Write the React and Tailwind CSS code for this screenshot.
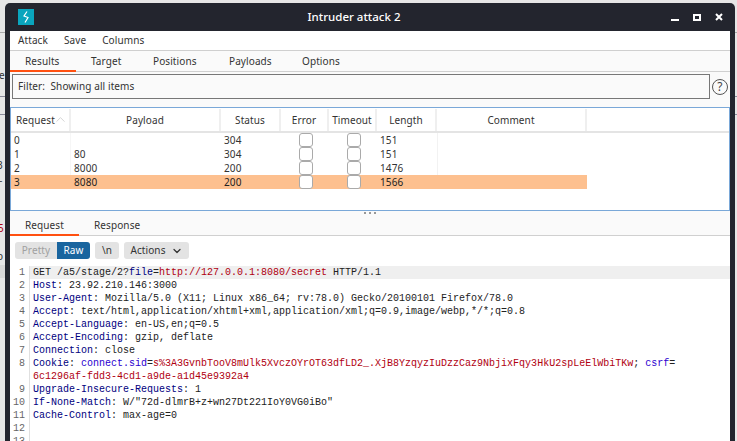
import { ChevronDown, ChevronUp } from 'lucide-react';

const UI = "font-['Noto_Sans',sans-serif]";

const COLUMNS = [
  { label: 'Request', width: 'w-[60px]' },
  { label: 'Payload', width: 'w-[150px]' },
  { label: 'Status', width: 'w-[60px]' },
  { label: 'Error', width: 'w-[48px]' },
  { label: 'Timeout', width: 'w-[48px]' },
  { label: 'Length', width: 'w-[60px]' },
  { label: 'Comment', width: 'w-[150px]' },
];

const ROWS = [
  { id: '0', payload: '', status: '304', length: '151' },
  { id: '1', payload: '80', status: '304', length: '151' },
  { id: '2', payload: '8000', status: '200', length: '1476' },
  { id: '3', payload: '8080', status: '200', length: '1566', selected: true },
];

const N = ({ children }) => <span className="text-[#000080]">{children}</span>;
const R = ({ children }) => <span className="text-[#b00010]">{children}</span>;
const B = ({ children }) => <span className="text-[#2a00d0]">{children}</span>;

const LINES = [
  { n: 1, active: true, text: <>GET /a5/stage/2?<N>file</N>=<R>http://127.0.0.1:8080/secret</R> HTTP/1.1</> },
  { n: 2, text: <><N>Host</N>: 23.92.210.146:3000</> },
  { n: 3, text: <><N>User-Agent</N>: Mozilla/5.0 (X11; Linux x86_64; rv:78.0) Gecko/20100101 Firefox/78.0</> },
  { n: 4, text: <><N>Accept</N>: text/html,application/xhtml+xml,application/xml;q=0.9,image/webp,*/*;q=0.8</> },
  { n: 5, text: <><N>Accept-Language</N>: en-US,en;q=0.5</> },
  { n: 6, text: <><N>Accept-Encoding</N>: gzip, deflate</> },
  { n: 7, text: <><N>Connection</N>: close</> },
  { n: 8, text: <><N>Cookie</N>: <B>connect.sid</B>=<R>s%3A3GvnbTooV8mUlk5XvczOYrOT63dfLD2_.XjB8YzqyzIuDzzCaz9NbjixFqy3HkU2spLeElWbiTKw</R>; <B>csrf</B>=</> },
  { n: '', text: <R>6c1296af-fdd3-4cd1-a9de-a1d45e9392a4</R> },
  { n: 9, text: <><N>Upgrade-Insecure-Requests</N>: 1</> },
  { n: 10, text: <><N>If-None-Match</N>: W/"72d-dlmrB+z+wn27Dt221IoY0VG0iBo"</> },
  { n: 11, text: <><N>Cache-Control</N>: max-age=0</> },
  { n: 12, text: '' },
  { n: 13, text: '' },
];

export default function App() {
  return (
    <div className={`relative w-[737px] h-[441px] overflow-hidden bg-[#e6e6e6] pt-[3px] pl-[5px] pr-[2px] ${UI}`}>
      {/* Whatever is behind the window, left edge */}
      <div className="absolute left-0 top-0 w-[5px] h-[441px] overflow-hidden text-[10px] text-[#333]">
        <div className="absolute left-0 top-[32px] w-full h-px bg-[#aaa]" />
        <div className="absolute left-0 top-[96px] w-full h-px bg-[#8a8a9a]" />
        <div className="absolute left-0 top-[114px] w-full h-px bg-[#8a8a9a]" />
        <span className="absolute -left-[1px] top-[68px]">e</span>
        <span className="absolute -left-[3px] top-[158px]">3</span>
        <span className="absolute -left-[3px] top-[171px]">L</span>
        <span className="absolute -left-[2px] top-[221px] text-[#b00010]">5</span>
        <span className="absolute -left-[3px] top-[249px]">o</span>
        <div className="absolute left-0 top-[265px] w-full h-[13px] bg-[#d8d8d8]" />
      </div>
      {/* Right edge */}
      <div className="absolute right-0 top-0 w-[2px] h-[441px]">
        <div className="absolute left-0 top-[32px] w-full h-px bg-[#aaa]" />
        <div className="absolute left-0 top-[96px] w-full h-px bg-[#8a8a9a]" />
        <div className="absolute left-0 top-[114px] w-full h-px bg-[#8a8a9a]" />
      </div>

      {/* Window */}
      <div className="relative h-[438px] flex flex-col rounded-t-[5px] bg-[#23252e] px-[5px] overflow-hidden">
        {/* Title bar */}
        <div className="relative h-[28px] shrink-0 flex items-center justify-center pr-[32px] text-[11.5px] font-medium text-white">
          <div className="absolute left-[8px] top-[6px] w-4 h-4 bg-[#0aa5bd] flex items-center justify-center">
            <svg width="8" height="12" viewBox="0 0 8 12" fill="none" stroke="#fff" strokeWidth="1.2">
              <path d="M5 0.5 L2 5 L6 6.5 L3 11.5" />
            </svg>
          </div>
          Intruder attack 2
          <div className="absolute right-[3px] top-[7px] flex items-center">
            <svg width="68" height="14" viewBox="0 0 68 14" fill="none" stroke="#fff" strokeWidth="2">
              <path d="M12 10 H20" />
              <rect x="35" y="5" width="6" height="5" />
              <path d="M57 4 L63 10 M63 4 L57 10" />
            </svg>
          </div>
        </div>

        {/* Content */}
        <div className="flex-1 flex flex-col bg-white text-[10px] tracking-[0.1px] text-[#333]">
          {/* Menu */}
          <div className="h-[20px] shrink-0 flex items-center gap-[16px] pl-2 bg-white border-b border-[#cfcfcf]">
            <span>Attack</span>
            <span>Save</span>
            <span>Columns</span>
          </div>

          {/* Main tabs */}
          <div className="h-[21px] shrink-0 flex bg-[#fafafa] border-b border-[#d0d0d0]">
            <div className="w-[66px] h-[21px] pl-[15px] pt-[3px] border-b-2 border-[#ff5010]">Results</div>
            <div className="w-[77px] pl-[15px] pt-[3px]">Target</div>
            <div className="w-[76px] pt-[3px]">Positions</div>
            <div className="w-[73px] pt-[3px]">Payloads</div>
            <div className="pt-[3px]">Options</div>
          </div>

          {/* Filter */}
          <div className="h-[35px] shrink-0 flex items-start bg-[#fafafa] pt-[2px] pl-[2px]">
            <div className="w-[698px] h-[25px] border border-[#777] bg-[#fafafa] flex items-center pl-[5px]">
              Filter:&nbsp; Showing all items
            </div>
            <div className="ml-[2px] mt-[5px] w-[16px] h-[16px] rounded-full border border-[#555] flex items-center justify-center text-[12px] text-[#444]">?</div>
          </div>

          {/* Results table */}
          <div className="h-[104px] shrink-0 border border-[#7aa8d8] bg-white">
            <div className="h-[25px] flex border-b-2 border-[#e4e4e4] pt-[1px]">
              {COLUMNS.map((c) => (
                <div key={c.label} className={`${c.width} h-[22px] relative flex items-center justify-center border-r-2 border-[#efefef]`}>
                  {c.label === 'Request' ? <span className="absolute left-[5px]">{c.label}</span> : c.label}
                  {c.label === 'Request' && <ChevronUp className="absolute right-[1px] top-[3px] w-[15px] h-[15px] text-[#bbb]" strokeWidth={1} />}
                </div>
              ))}
            </div>
            {ROWS.map((r) => (
              <div key={r.id} className={`w-[576px] h-[14px] flex items-center leading-[14px] ${r.selected ? 'bg-[#fdc08f] text-[#222]' : ''}`}>
                <div className={`w-[60px] self-stretch pl-[3px] border-r ${r.selected ? 'border-transparent' : 'border-[#f6f6f6]'}`}>{r.id}</div>
                <div className="w-[150px] pl-[3px]">{r.payload}</div>
                <div className="w-[60px] pl-[3px]">{r.status}</div>
                <div className="w-[48px] pl-[2px] flex justify-center"><span className="w-[14px] h-[14px] rounded-[3px] border border-[#aaa] bg-white" /></div>
                <div className="w-[48px] pl-[2px] flex justify-center"><span className="w-[14px] h-[14px] rounded-[3px] border border-[#aaa] bg-white" /></div>
                <div className="w-[60px] pl-[3px]">{r.length}</div>
                <div className={`flex-1 self-stretch border-l ${r.selected ? 'border-transparent' : 'border-[#f2f2f2]'}`} />
              </div>
            ))}
          </div>

          {/* Splitter */}
          <div className="h-[3px] shrink-0 flex items-center justify-center gap-[3px] bg-[#fafafa]">
            <span className="w-[2px] h-[2px] bg-[#999]" />
            <span className="w-[2px] h-[2px] bg-[#999]" />
            <span className="w-[2px] h-[2px] bg-[#999]" />
          </div>

          {/* Request / Response tabs */}
          <div className="h-[22px] shrink-0 flex bg-[#fafafa] border-b border-[#d0d0d0]">
            <div className="w-[69px] h-[22px] pl-[15px] pt-[4px] border-b-2 border-[#ff5010]">Request</div>
            <div className="pl-[15px] pt-[4px]">Response</div>
          </div>

          {/* Toolbar */}
          <div className="h-[27px] shrink-0 flex items-start gap-[5px] pl-[5px] pt-[6px] bg-white">
            <div className="flex h-[17px] rounded-[3px] overflow-hidden">
              <span className="w-[42px] flex items-center justify-center bg-[#e3e3e3] text-[#a0a0a0]">Pretty</span>
              <span className="w-[33px] flex items-center justify-center bg-[#19659f] text-white">Raw</span>
            </div>
            <span className="w-[24px] h-[17px] rounded-[3px] flex items-center justify-center bg-[#e3e3e3]">\n</span>
            <span className="w-[65px] h-[17px] rounded-[3px] flex items-center justify-center gap-[5px] bg-[#e3e3e3]">
              Actions
              <ChevronDown className="w-3 h-3" strokeWidth={2.5} />
            </span>
          </div>

          {/* Raw message editor */}
          <div className="flex-1 pt-[3px] font-['Liberation_Mono',monospace] text-[10px] leading-[13px] tracking-normal text-[#222]">
            {LINES.map((l, i) => (
              <div key={i} className="flex h-[13px]">
                <div className="w-[15px] shrink-0 text-right pr-[4px] text-[#666] border-r border-[#e0e0e0] box-content">{l.n}</div>
                <div className={`flex-1 pl-[3px] whitespace-pre ${l.active ? 'bg-[#efefef]' : ''}`}>{l.text}</div>
              </div>
            ))}
          </div>
        </div>
      </div>
    </div>
  );
}
